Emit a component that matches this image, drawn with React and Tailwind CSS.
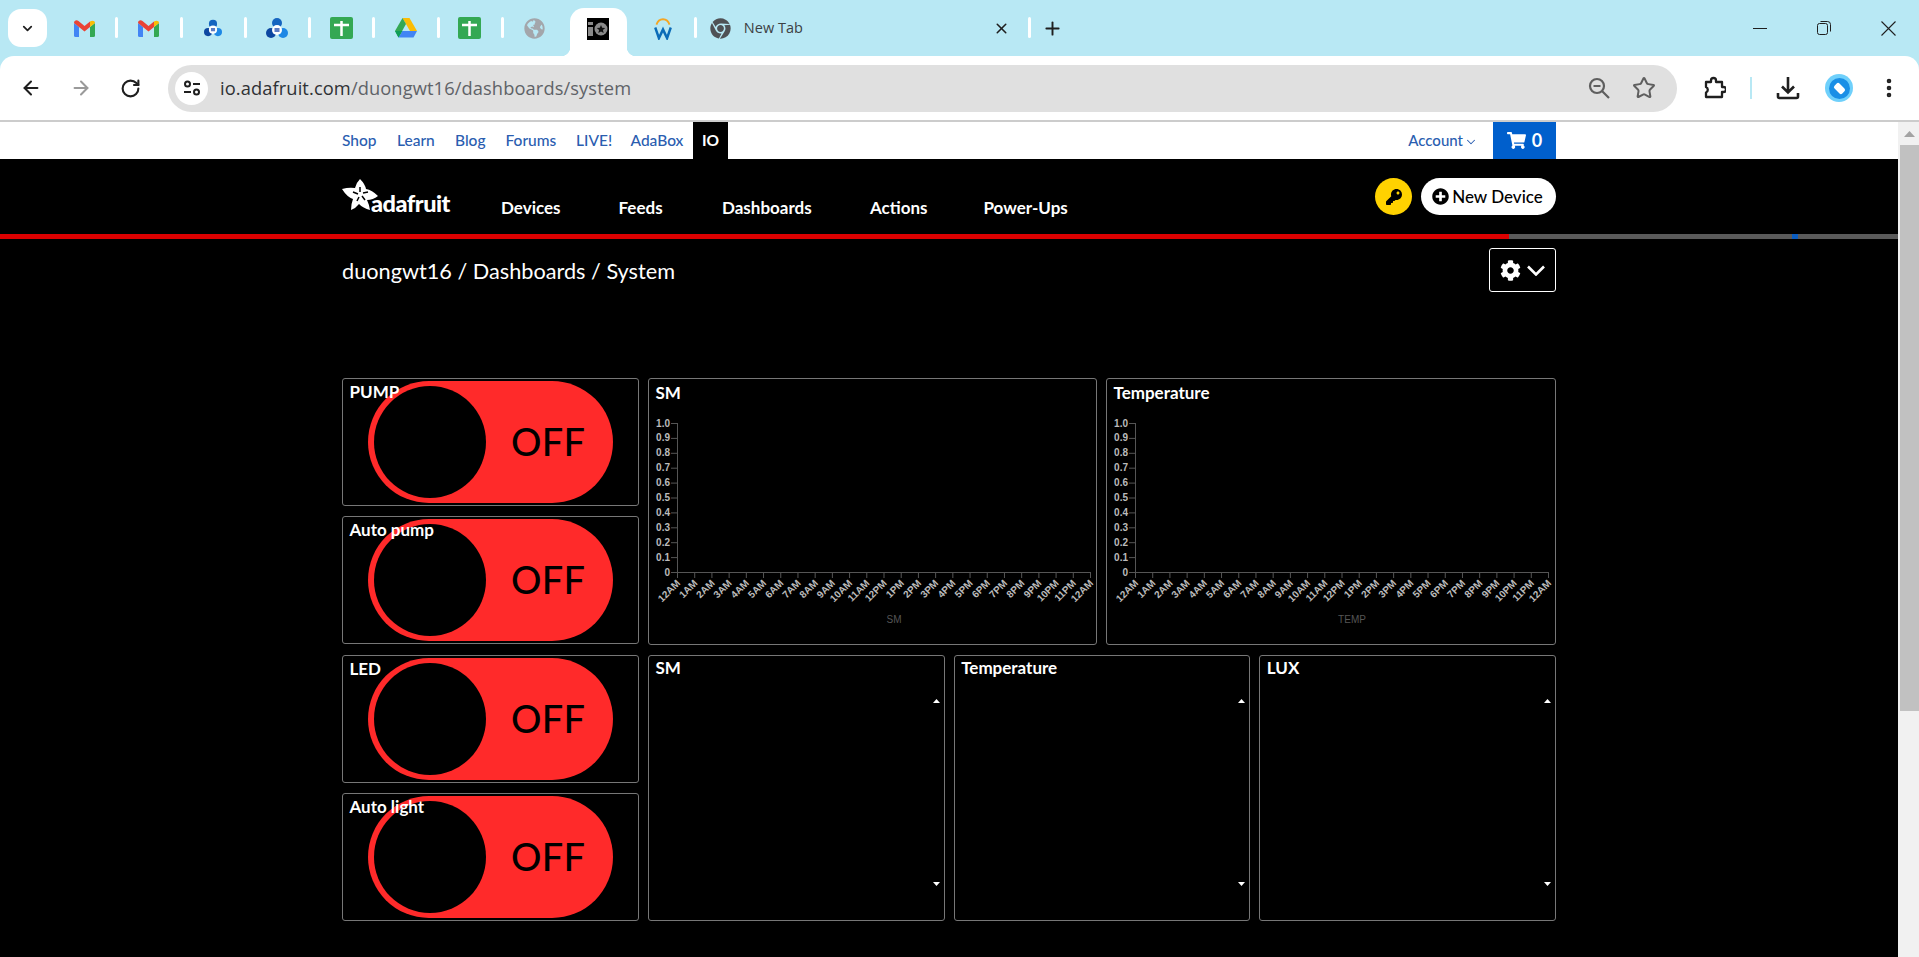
import React from 'react';
import { ArrowLeft, ArrowRight, RotateCw, Star, X, Plus, ChevronDown, EllipsisVertical } from 'lucide-react';
import { FaKey, FaPlusCircle, FaCog, FaShoppingCart, FaChrome, FaGlobeAmericas } from 'react-icons/fa';

const Gmail = () => (
  <svg width="21" height="17" viewBox="0 0 21 17">
    <path d="M0 3v12.5A1.5 1.5 0 0 0 1.5 17H5V7z" fill="#4285f4" />
    <path d="M16 7v10h3.5a1.5 1.5 0 0 0 1.5-1.5V3z" fill="#34a853" />
    <path d="M0 3c0-3 3-3.500 4.500-2L10.500 6 16 1.500 16 7l-5.500 4.500L0 3z" fill="#ea4335" />
    <path d="M16 1.500C18 0 21 .5 21 3l-5 4z" fill="#fbbc04" />
  </svg>
);

const Iit = ({ size = 20 }) => (
  <svg width={size} height={size} viewBox="0 0 22 22">
    <circle cx="11" cy="6" r="5" fill="#1565c0" />
    <circle cx="5" cy="16" r="5" fill="#0d47a1" />
    <circle cx="17" cy="16" r="5" fill="#1e88e5" />
    <circle cx="11" cy="13" r="5" fill="#fff" />
    <rect x="8.500" y="11" width="5" height="4" fill="#5c7cc4" />
  </svg>
);

const Sheets = () => (
  <div className="w-[23px] h-[22px] rounded-[2px] bg-[#34a853] flex items-center justify-center">
    <svg width="15" height="15" viewBox="0 0 15 15">
      <path d="M0 4h15M7.500 0v15" stroke="#fff" strokeWidth="2.500" fill="none" />
    </svg>
  </div>
);

const Drive = () => (
  <svg width="22" height="20" viewBox="0 0 22 20">
    <path d="M7.500 0h7l7.500 13h-7z" fill="#fbbc04" />
    <path d="M7.500 0 0 13l3.500 6.500L11 6z" fill="#34a853" />
    <path d="M3.500 19.500 7.300 13H22l-3.500 6.500z" fill="#4285f4" />
    <path d="M0 13h7.300l-3.800 6.500z" fill="#0f9d58" />
  </svg>
);

const IoIcon = () => (
  <div className="w-[22px] h-[22px] bg-black flex items-center justify-center">
    <svg width="20" height="16" viewBox="0 0 20 16">
      <rect x="0" y="1" width="5" height="3" fill="#8a8a8a" />
      <rect x="0" y="6" width="5" height="9" fill="#8a8a8a" />
      <circle cx="13" cy="8" r="6.500" fill="#8a8a8a" />
      <path d="m13 4 1.200 2.800 3 .2-2.300 2 .8 3-2.700-1.600L10.300 12l.8-3-2.300-2 3-.2z" fill="#111" />
    </svg>
  </div>
);

const Workday = () => (
  <svg width="18" height="23" viewBox="0 0 22 24" preserveAspectRatio="none">
    <path d="M3 8a8.500 8.500 0 0 1 16 0" stroke="#f5a623" strokeWidth="2.200" fill="none" />
    <path d="M1.500 11 6 22l5-9 5 9 4.500-11" stroke="#0b6cb8" strokeWidth="3" fill="none" />
  </svg>
);

const tabs = [
  { key: 'g1', icon: <Gmail /> },
  { key: 'g2', icon: <Gmail /> },
  { key: 'i1', icon: <Iit size={18} /> },
  { key: 'i2', icon: <Iit size={22} /> },
  { key: 's1', icon: <Sheets /> },
  { key: 'd1', icon: <Drive /> },
  { key: 's2', icon: <Sheets /> },
  { key: 'gl', icon: <FaGlobeAmericas className="text-[21px] text-[#a3a6ab]" /> },
];

const Separator = () => <div className="w-[3px] h-[21px] bg-white rounded-sm shrink-0" />;

const TabStrip = () => (
  <div className="h-[56px] bg-[#b8e8f4] flex items-start relative">
    <div className="w-[39px] h-[38px] ml-[8px] mt-[9px] mr-[5px] bg-white rounded-[13px] flex items-center justify-center">
      <ChevronDown size={15} strokeWidth={2.800} className="text-[#1f1f1f]" />
    </div>
    {tabs.map((t, i) => (
      <div key={t.key} className="w-[64.3px] h-[56px] flex items-center relative">
        <div className="flex-1 flex justify-center">{t.icon}</div>
        {i < 7 && <div className="absolute right-[-2px] top-[17px]"><Separator /></div>}
      </div>
    ))}
    {/* active tab */}
    <div className="w-[57px] h-[48px] mt-[8px] mx-[3.6px] bg-white rounded-t-[14px] flex items-center justify-center relative pb-[6px]">
      <IoIcon />
      <div className="absolute bottom-0 left-[-9px] w-[9px] h-[9px] bg-[radial-gradient(circle_at_0_0,transparent_9px,#fff_9.500px)]" />
      <div className="absolute bottom-0 right-[-9px] w-[9px] h-[9px] bg-[radial-gradient(circle_at_100%_0,transparent_9px,#fff_9.500px)]" />
    </div>
    <div className="w-[64.3px] h-[56px] flex items-center justify-center relative">
      <Workday />
      <div className="absolute right-[-2px] top-[17px]"><Separator /></div>
    </div>
    <div className="w-[334px] h-[56px] flex items-center pl-[15px] relative">
      <FaChrome className="text-[21px] text-[#4f5155]" />
      <span className="ml-[13px] text-[14.500px] text-[#3c4043] font-['Open_Sans',sans-serif]">New Tab</span>
      <X size={17} strokeWidth={2.200} className="absolute right-[19px] top-[20px] text-[#1f1f1f]" />
      <div className="absolute right-[-2px] top-[17px]"><Separator /></div>
    </div>
    <Plus size={21} strokeWidth={2.200} className="ml-[13px] mt-[18px] text-[#1f1f1f]" />
    <div className="ml-auto flex items-center h-[56px]">
      <div className="w-[14px] h-[1px] bg-[#1f1f1f] mr-[49px]" />
      <svg width="16" height="16" viewBox="0 0 16 16" className="mr-[48.500px]" fill="none" stroke="#1f1f1f" strokeWidth="1">
        <rect x="1.500" y="3.500" width="10" height="11" rx="2" />
        <path d="M4.500 1.500h7a3 3 0 0 1 3 3v7" />
      </svg>
      <svg width="15" height="15" viewBox="0 0 15 15" className="mr-[23.500px]" stroke="#1f1f1f" strokeWidth="1.100">
        <path d="M.5.5l14 14M14.500.5l-14 14" />
      </svg>
    </div>
  </div>
);

const Toolbar = () => (
  <div className="bg-[#b8e8f4]">
    <div className="h-[64px] bg-white rounded-t-[14px] flex items-center text-[#1f1f1f]">
      <ArrowLeft size={22} strokeWidth={2.200} className="ml-[20px]" />
      <ArrowRight size={22} strokeWidth={2.200} className="ml-[28px] text-[#9a9a9a]" />
      <RotateCw size={21} strokeWidth={2.400} className="ml-[28px]" />
      <div className="ml-[27px] w-[1509px] h-[47px] bg-[#e0e0e0] rounded-full flex items-center pl-[7px] pr-[21px]">
        <div className="w-[33px] h-[33px] rounded-full bg-white flex items-center justify-center">
          <svg width="18" height="16" viewBox="0 0 18 16" fill="none" stroke="#1f1f1f" strokeWidth="2">
            <circle cx="4.500" cy="4" r="2.500" />
            <path d="M10 4h7M1 12h7" />
            <circle cx="13.500" cy="12" r="2.500" />
          </svg>
        </div>
        <div className="ml-[12px] text-[18.300px] text-[#5f6368] font-['Open_Sans',sans-serif] tracking-[0.1px]">
          <span className="text-[#2f3134]">io.adafruit.com</span>/duongwt16/dashboards/system
        </div>
        <div className="ml-auto flex items-center text-[#5f5f5f]">
          <svg width="22" height="22" viewBox="0 0 22 22" fill="none" stroke="currentColor" strokeWidth="2.200">
            <circle cx="9" cy="9" r="7" />
            <path d="M5.500 9h7M14 14l7 7" />
          </svg>
          <Star size={24} strokeWidth={2} className="ml-[22px]" />
        </div>
      </div>
      <svg width="24" height="24" viewBox="0 0 24 24" fill="none" stroke="#1f1f1f" strokeWidth="2.300" strokeLinejoin="round" className="ml-[25px]">
        <path d="M4 6h5V4.500a2.500 2.500 0 0 1 5 0V6h6v5h1.500a2.500 2.500 0 0 1 0 5H20v5H4v-4.500a3 3 0 0 0 0-5.500z" />
      </svg>
      <div className="w-[2px] h-[22px] bg-[#b8e8f4] ml-[24px]" />
      <svg width="24" height="24" viewBox="0 0 24 24" fill="none" stroke="#1f1f1f" strokeWidth="2.600" className="ml-[24px]">
        <path d="M12 1v15M6 10.500l6 6 6-6M2 17v3.500a1.500 1.500 0 0 0 1.500 1.500h17a1.500 1.500 0 0 0 1.500-1.500V17" />
      </svg>
      <div className="ml-[25px] w-[28px] h-[28px] rounded-full bg-[#6fd0fb] flex items-center justify-center">
        <div className="w-[21px] h-[21px] rounded-full bg-[#1a8fe6] flex items-center justify-center">
          <div className="w-[11px] h-[7px] bg-white rounded-[2px] rotate-45" />
        </div>
      </div>
      <EllipsisVertical size={24} strokeWidth={2.600} className="ml-[24px]" />
    </div>
    <div className="h-[2px] bg-[#cccccc]" />
  </div>
);

const topLinks = [
  ['Shop', 'w-[55px]'],
  ['Learn', 'w-[58px]'],
  ['Blog', 'w-[50.500px]'],
  ['Forums', 'w-[70.500px]'],
  ['LIVE!', 'w-[54.500px]'],
  ['AdaBox', 'w-[62.500px]'],
];

const TopBar = () => (
  <div className="h-[37px] bg-white">
    <div className="w-[1214px] mx-auto h-full flex items-center text-[15.500px] font-medium text-[#2a5db0]">
      {topLinks.map(([label, w]) => (
        <a key={label} className={w}>{label}</a>
      ))}
      <a className="w-[35px] h-full bg-black text-white font-bold flex items-center justify-center">IO</a>
      <a className="ml-auto flex items-center text-[15px]">
        Account
        <ChevronDown size={14} strokeWidth={1.800} className="ml-[1px] mt-[2px]" />
      </a>
      <a className="ml-[15px] w-[63px] h-full bg-[#005fcc] text-white text-[18px] font-bold flex items-center justify-center">
        <FaShoppingCart className="text-[19px] mr-[6px]" />0
      </a>
    </div>
  </div>
);

const navItems = [
  ['Devices', 'w-[117.500px]'],
  ['Feeds', 'w-[103.500px]'],
  ['Dashboards', 'w-[148px]'],
  ['Actions', 'w-[113.500px]'],
  ['Power-Ups', ''],
];

const Logo = () => (
  <div className="flex items-end h-[37px] w-[108px] relative">
    <svg width="36" height="31" viewBox="0 0 36 31" className="absolute left-0 top-[1px]">
      <path d="M18 0Q23 5 24 10Q30 11 36 17Q31 21 25 21Q27 25 28 31Q21 29 17 25Q14 29 9 31Q9 25 11 20Q5 18 0 10Q7 8 13 9Q14 4 18 0Z" fill="#fff" />
      <path d="M18 8v5M11 13l5 2M21 14l5-1M15 22l2-4M23 21l-3-4" stroke="#000" strokeWidth="1.500" />
    </svg>
    <span className="ml-[29px] text-[23.500px] leading-[24px] font-black text-white tracking-[-0.5px]">adafruit</span>
  </div>
);

const Header = () => (
  <div className="bg-black">
    <div className="w-[1214px] mx-auto h-[75px] flex items-start pt-[19px]">
      <Logo />
      <nav className="ml-[51px] flex items-center h-[36px] mt-[12px] text-[17px] font-bold text-white">
        {navItems.map(([label, w]) => (
          <a key={label} className={w}>{label}</a>
        ))}
      </nav>
      <div className="ml-auto flex items-center">
        <div className="w-[37px] h-[37px] rounded-full bg-[#ffd200] flex items-center justify-center">
          <FaKey className="text-[16px] text-black" />
        </div>
        <button className="ml-[9px] w-[135px] h-[37px] rounded-full bg-white text-black text-[17px] font-medium flex items-center justify-center pr-[2px]">
          <FaPlusCircle className="text-[17px] mr-[3px]" />New Device
        </button>
      </div>
    </div>
    <div className="h-[5px] bg-[#5a5a5a] flex">
      <div className="w-[1509px] bg-[#dc0000]" />
      <div className="ml-[283px] w-[6px] bg-[#0a5cc0]" />
    </div>
  </div>
);

const Card = ({ title, children, className = '', titleClass = 'top-[4px]' }) => (
  <div className={`relative border border-[#777777] rounded-[3px] ${className}`}>
    {children}
    <div className={`absolute left-[6.500px] text-[17px] font-bold text-white leading-[20px] ${titleClass}`}>{title}</div>
  </div>
);

const ToggleCard = ({ title }) => (
  <Card title={title} titleClass="top-[3px]" className="h-[128px] flex items-center justify-center">
    <div className="w-[245px] h-[122px] rounded-full bg-[#ff2a2a] flex items-center pl-[6px]">
      <div className="w-[112px] h-[112px] rounded-full bg-black" />
      <span className="ml-[25px] mb-[2px] text-[38px] leading-none font-medium tracking-[0.3px] text-black">OFF</span>
    </div>
  </Card>
);

const hours = ['12AM', '1AM', '2AM', '3AM', '4AM', '5AM', '6AM', '7AM', '8AM', '9AM', '10AM', '11AM', '12PM', '1PM', '2PM', '3PM', '4PM', '5PM', '6PM', '7PM', '8PM', '9PM', '10PM', '11PM', '12AM'];
const yLabels = ['1.0', '0.9', '0.8', '0.7', '0.6', '0.5', '0.4', '0.3', '0.2', '0.1', '0'];

const ChartCard = ({ title, axis, className = '' }) => {
  const x0 = 28;
  const xEnd = 441;
  const yTop = 44;
  const yBot = 193;
  const stepX = (xEnd - x0) / 24;
  const stepY = (yBot - yTop) / 10;
  return (
    <Card title={title} className={`h-[267px] ${className}`}>
      <svg width="447" height="265" className="block font-['Liberation_Sans',sans-serif]">
        <path d={`M${x0 + 0.5} ${yTop}V${yBot + 0.5}H${xEnd}`} stroke="#555" fill="none" />
        {yLabels.map((l, i) => (
          <g key={l}>
            <path d={`M${x0 - 6} ${yTop + i * stepY + 0.5}H${x0}`} stroke="#555" />
            <text x={x0 - 7} y={yTop + i * stepY + 3.5} textAnchor="end" fontSize="10" fontWeight="700" fill="#bbbbbb">{l}</text>
          </g>
        ))}
        {hours.map((h, i) => {
          const x = x0 + i * stepX;
          return (
            <g key={i}>
              <path d={`M${x + 0.5} ${yBot}v6`} stroke="#555" />
              <text transform={`translate(${x + 2} ${yBot + 10}) rotate(-45)`} textAnchor="end" dominantBaseline="middle" fontSize="10" fontWeight="700" fill="#bbbbbb">{h}</text>
            </g>
          );
        })}
        <text x="245" y="244" textAnchor="middle" fontSize="10" fill="#555555">{axis}</text>
      </svg>
    </Card>
  );
};

const TextCard = ({ title }) => (
  <Card title={title} titleClass="top-[2px]" className="h-[266px] flex flex-col items-end justify-between pt-[43px] pb-[34px] pr-[4px]">
    <svg width="7" height="4" viewBox="0 0 7 4"><path d="M3.500 0 7 4H0z" fill="#fff" /></svg>
    <svg width="7" height="4" viewBox="0 0 7 4"><path d="M0 0h7L3.500 4z" fill="#fff" /></svg>
  </Card>
);

const Dashboard = () => (
  <div className="w-[1214px] mx-auto">
    <div className="flex justify-between items-center h-[44px] mt-[9px] mb-[86px]">
      <h1 className="text-[21.700px] text-white font-normal pt-[2px]">duongwt16 / Dashboards / System</h1>
      <button className="w-[67px] h-[44px] border border-white rounded-[3px] flex items-center justify-center text-white">
        <FaCog className="text-[21px] mr-[6px]" />
        <svg width="18" height="11" viewBox="0 0 18 11" fill="none" stroke="#fff" strokeWidth="2.600">
          <path d="M1 1.500l8 8 8-8" />
        </svg>
      </button>
    </div>
    <div className="flex gap-[9px]">
      <div className="w-[297px] h-[543px] flex flex-col justify-between">
        <ToggleCard title="PUMP" />
        <ToggleCard title="Auto pump" />
        <ToggleCard title="LED" />
        <ToggleCard title="Auto light" />
      </div>
      <div className="flex-1 flex flex-col gap-[10px]">
        <div className="flex gap-[9px]">
          <ChartCard title="SM" axis="SM" className="w-[449px]" />
          <ChartCard title="Temperature" axis="TEMP" className="flex-1" />
        </div>
        <div className="grid grid-cols-3 gap-[9px]">
          <TextCard title="SM" />
          <TextCard title="Temperature" />
          <TextCard title="LUX" />
        </div>
      </div>
    </div>
  </div>
);

const Scrollbar = () => (
  <div className="w-[21px] bg-[#f1f1f1] flex flex-col items-end shrink-0">
    <div className="w-[19px] h-[23px] flex items-center justify-center">
      <svg width="11" height="6" viewBox="0 0 11 6"><path d="M5.500 0 11 6H0z" fill="#a3a3a3" /></svg>
    </div>
    <div className="w-[19px] h-[566px] bg-[#c1c1c1]" />
  </div>
);

export default function App() {
  return (
    <div className="h-[957px] w-[1919px] overflow-hidden bg-black font-['Lato',sans-serif]">
      <TabStrip />
      <Toolbar />
      <div className="flex h-[835px]">
        <div className="flex-1 min-w-0">
          <TopBar />
          <Header />
          <Dashboard />
        </div>
        <Scrollbar />
      </div>
    </div>
  );
}
